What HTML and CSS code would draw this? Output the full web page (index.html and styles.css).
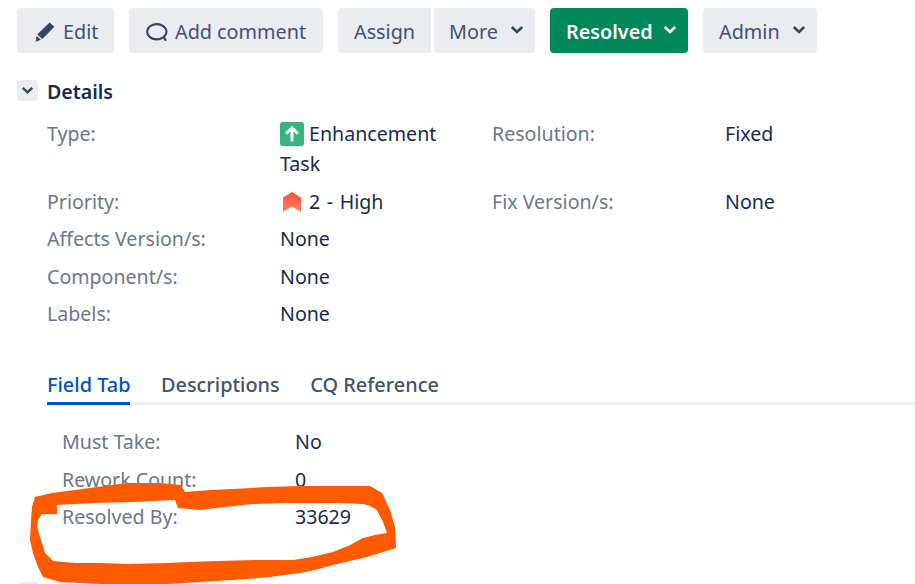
FILE: index.html
```html
<!DOCTYPE html>
<html lang="en">
<head>
<meta charset="utf-8">
<title>Issue details</title>
<link rel="stylesheet" href="styles.css">
</head>
<body>
<div class="page">
  <div class="toolbar">
    <a class="btn btn-edit">
      <svg class="ic-edit" viewBox="0 0 20 20" width="20" height="20"><path d="M14.6 .6 19.4 4.8 7.4 17 2.2 12.5Z" fill="#344563"/><path d="M1.7 14 5.9 17.8 .6 19.8Z" fill="#344563"/></svg>
      <span>Edit</span>
    </a>
    <a class="btn btn-comment">
      <svg class="ic-comment" viewBox="0 0 22 20" width="22" height="20"><path d="M19.4 17.9 17.6 15.2A9.6 7.6 0 1 0 11 17.4C13 17.4 15 16.9 16.2 15.8" fill="none" stroke="#344563" stroke-width="2.1" stroke-linecap="round"/></svg>
      <span>Add comment</span>
    </a>
    <div class="group">
      <a class="btn btn-assign">Assign</a>
      <a class="btn btn-more"><span>More</span><svg class="chev" viewBox="0 0 14 10" width="14" height="10"><path d="M1.8 2 7 7 12.2 2" fill="none" stroke="#344563" stroke-width="2.6"/></svg></a>
    </div>
    <a class="btn btn-resolved"><span>Resolved</span><svg class="chev" viewBox="0 0 14 10" width="14" height="10"><path d="M1.8 2 7 7 12.2 2" fill="none" stroke="#fff" stroke-width="2.6"/></svg></a>
    <a class="btn btn-admin"><span>Admin</span><svg class="chev" viewBox="0 0 14 10" width="14" height="10"><path d="M1.8 2 7 7 12.2 2" fill="none" stroke="#344563" stroke-width="2.6"/></svg></a>
  </div>

  <div class="section-head">
    <span class="toggle"><svg viewBox="0 0 14 10" width="13" height="9"><path d="M1.8 2 7 7 12.2 2" fill="none" stroke="#344563" stroke-width="2.8"/></svg></span>
    <h2>Details</h2>
  </div>

  <div class="details">
    <div class="row">
      <div class="label">Type:</div>
      <div class="value type-value"><svg class="ic-type" viewBox="0 0 24 24" width="24" height="24"><rect width="24" height="24" rx="3" fill="#36b37e"/><path d="M12 19.5V6M6.2 11.6 12 5.8 17.8 11.6" fill="none" stroke="#fff" stroke-width="3"/></svg> Enhancement Task</div>
      <div class="label">Resolution:</div>
      <div class="value">Fixed</div>
    </div>
    <div class="row">
      <div class="label">Priority:</div>
      <div class="value prio-value"><svg class="ic-prio" viewBox="0 0 18 20" width="18" height="20"><defs><linearGradient id="pg" x1="0" y1="0" x2="0" y2="1"><stop offset="0" stop-color="#ff5630"/><stop offset="1" stop-color="#ff8066"/></linearGradient></defs><path d="M9 0 18 5.5V20L9 14.5 0 20V5.5Z" fill="url(#pg)"/></svg><span>2 - High</span></div>
      <div class="label">Fix Version/s:</div>
      <div class="value">None</div>
    </div>
    <div class="row">
      <div class="label">Affects Version/s:</div>
      <div class="value">None</div>
    </div>
    <div class="row">
      <div class="label">Component/s:</div>
      <div class="value">None</div>
    </div>
    <div class="row">
      <div class="label">Labels:</div>
      <div class="value">None</div>
    </div>
  </div>

  <div class="tabs">
    <a class="tab active">Field Tab</a>
    <a class="tab">Descriptions</a>
    <a class="tab">CQ Reference</a>
  </div>

  <div class="panel">
    <div class="label">Must Take:</div><div class="value">No</div>
    <div class="label">Rework Count:</div><div class="value">0</div>
    <div class="label">Resolved By:</div><div class="value">33629</div>
  </div>

  <span class="toggle next"></span>
</div>

<svg class="scribble" viewBox="0 0 915 584" width="915" height="584">
  <path fill="#ff5a00" fill-rule="evenodd" d="M35 497 52 493 90 488 127 483 160 483 181 485 185 492 210 490 233 489 267 487 300 486 333 486 370 486 382 493 390 510 395 527 396 548 380 553 367 557 350 561 333 565 315 570 300 573 270 577 233 580 200 582 167 584 100 584 60 582 43 577 38 567 33 553 30 540 31 520 32 507ZM57 505 57 514 42 514 38 520 37 527 41 540 45 553 53 561 75 563 100 563 130 564 167 563 190 562 217 561 255 560 293 560 312 557 333 552 350 545 363 538 375 535 387 533 383 522 377 510 370 506 363 504 340 503 317 503 285 503 253 504 225 507 200 510 178 508 175 500 133 502 95 503Z"/>
</svg>
</body>
</html>
```

FILE: styles.css
```css
* { box-sizing: border-box; }
html, body { margin: 0; height: 584px; overflow: hidden; background: #fff; }
body { position: relative; font-family: "Noto Sans", "Open Sans", Arial, sans-serif; font-size: 19.6px; color: #172b4d; }
.page { width: 915px; }

.toolbar { display: flex; gap: 15px; padding: 8px 17px 0; height: 53px; font-size: 19.8px; }
.group { display: flex; gap: 3px; }
.btn { display: flex; align-items: center; height: 45px; padding-top: 2px; border-radius: 4px; background: #ebecf0; color: #42526e; white-space: nowrap; }
.btn-edit { width: 97px; padding-left: 18px; gap: 8px; }
.btn-comment { width: 194px; padding-left: 17px; gap: 7px; }
.btn-assign { width: 93px; padding-left: 16px; border-radius: 4px 0 0 4px; }
.btn-more { width: 101px; padding-left: 15px; border-radius: 0 4px 4px 0; }
.btn-resolved { width: 138px; padding-left: 16px; background: #00875a; color: #fff; font-weight: 600; }
.btn-admin { width: 114px; padding-left: 16px; }
.chev { margin-left: 12px; margin-top: -4px; flex: none; }
.btn-resolved .chev { margin-left: 10px; }
.ic-edit, .ic-comment { flex: none; }

.section-head { display: flex; align-items: center; gap: 9px; height: 21px; margin: 27px 0 0 17px; }
.section-head h2 { margin: 2px 0 0; font-size: 19.6px; font-weight: 600; line-height: 21px; color: #172b4d; }
.toggle { display: flex; align-items: center; justify-content: center; width: 21px; height: 21px; border-radius: 4px; background: #ebecf0; flex: none; }
.next { margin: 0 0 0 19px; }

.label { color: #6b778c; white-space: nowrap; }
.details { display: flex; flex-direction: column; gap: 7.5px; margin: 18px 0 0 47px; line-height: 30px; }
.row { display: grid; grid-template-columns: 233px 212px 233px 190px; }
.type-value { width: 170px; }
.ic-type { vertical-align: -5px; }
.prio-value { display: flex; align-items: center; gap: 8px; padding-left: 3px; word-spacing: 1.5px; }
.ic-prio { flex: none; }

.tabs { display: flex; gap: 30.5px; height: 46px; margin: 30px 0 0 47px; border-bottom: 3px solid #ebecf0; font-size: 19.9px; }
.tab { display: block; height: 46px; padding-top: 6px; line-height: 40px; font-weight: 500; color: #42526e; white-space: nowrap; }
.tab.active { color: #0052cc; border-bottom: 3px solid #0052cc; }

.panel { display: grid; grid-template-columns: 233px 1fr; grid-auto-rows: 30px; row-gap: 7.5px; margin: 22px 0 0 62px; line-height: 30px; height: 155px; }

.scribble { position: absolute; left: 0; top: 0; }
```
